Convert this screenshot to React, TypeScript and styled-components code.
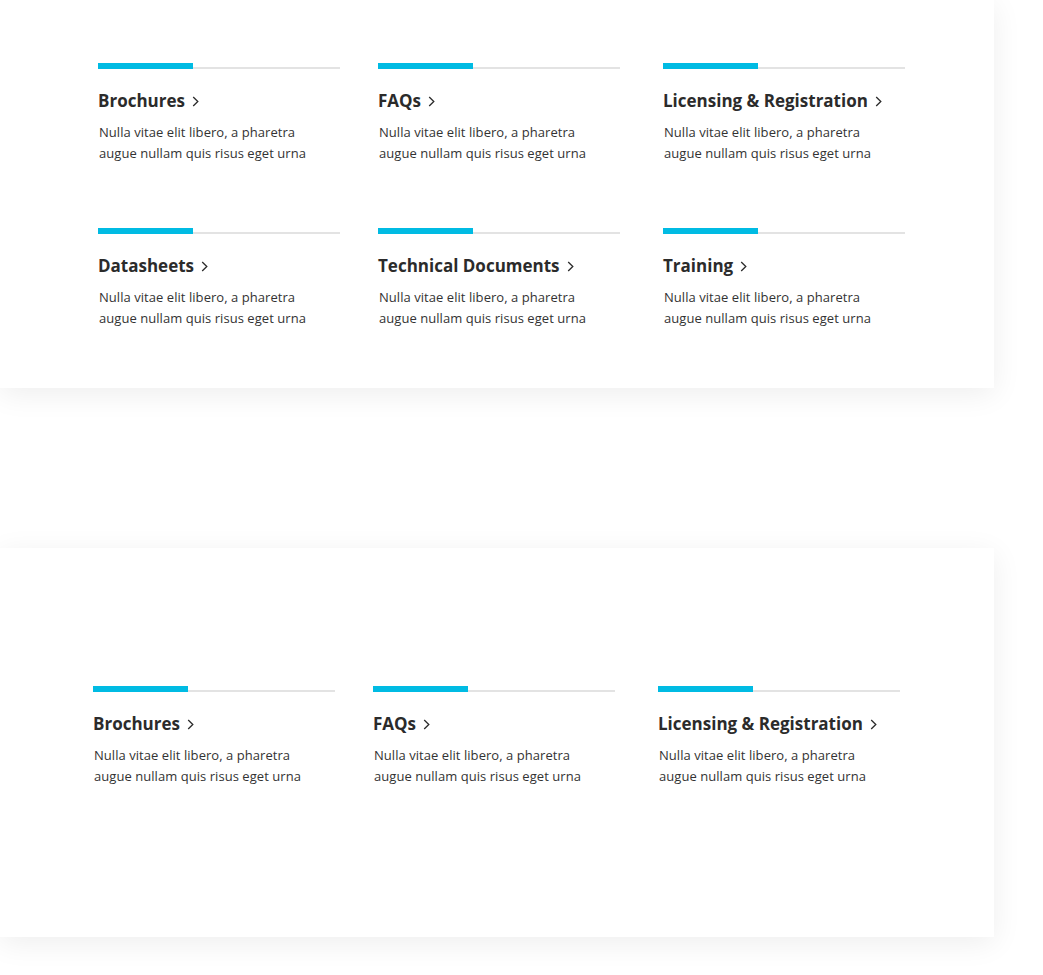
import styled, { createGlobalStyle } from 'styled-components';

const GlobalStyle = createGlobalStyle`
  html, body {
    margin: 0;
    padding: 0;
    background: #fff;
  }
  body {
    font-family: 'Open Sans', 'Noto Sans', sans-serif;
    color: #2b2b2b;
  }
`;

interface LinkItem {
  title: string;
}

const firstPanel: LinkItem[] = [
  { title: 'Brochures' },
  { title: 'FAQs' },
  { title: 'Licensing & Registration' },
  { title: 'Datasheets' },
  { title: 'Technical Documents' },
  { title: 'Training' },
];

const secondPanel: LinkItem[] = [
  { title: 'Brochures' },
  { title: 'FAQs' },
  { title: 'Licensing & Registration' },
];

const Chevron = () => (
  <svg width='7' height='11' viewBox='0 0 7 11' fill='none'>
    <polyline points='1.2,1 5.8,5.5 1.2,10' stroke='#2b2b2b' strokeWidth='1.3' />
  </svg>
);

const LinkCard = ({ item }: { item: LinkItem }) => (
  <Item>
    <Rule />
    <Title>
      {item.title}
      <Chevron />
    </Title>
    <Body>
      Nulla vitae elit libero, a pharetra
      <br />
      augue nullam quis risus eget urna
    </Body>
  </Item>
);

export default function App() {
  return (
    <>
      <GlobalStyle />
      <Page>
        <Panel $pad='63px 0 0 98px' $height={388}>
          <Grid>
            {firstPanel.map((item, i) => (
              <LinkCard key={item.title + i} item={item} />
            ))}
          </Grid>
        </Panel>
        <Panel $pad='138px 0 0 93px' $height={389}>
          <Grid>
            {secondPanel.map((item, i) => (
              <LinkCard key={item.title + i} item={item} />
            ))}
          </Grid>
        </Panel>
      </Page>
    </>
  );
}

const Page = styled.div`
  display: flex;
  flex-direction: column;
  gap: 160px;
  padding-bottom: 40px;
`;

const Panel = styled.section<{ $pad: string; $height: number }>`
  box-sizing: border-box;
  width: 994px;
  height: ${({ $height }) => $height}px;
  padding: ${({ $pad }) => $pad};
  background: #fff;
  box-shadow: 0 6px 28px rgba(0, 0, 0, 0.07);
`;

const Grid = styled.div`
  display: grid;
  grid-template-columns: 280px 285px 242px;
  grid-auto-rows: 165px;
`;

const Item = styled.div`
  width: 242px;
  display: flex;
  flex-direction: column;
`;

const Rule = styled.div`
  position: relative;
  height: 6px;
  &::before {
    content: '';
    position: absolute;
    left: 0;
    right: 0;
    bottom: 0;
    height: 2px;
    background: #e3e3e3;
  }
  &::after {
    content: '';
    position: absolute;
    left: 0;
    bottom: 0;
    width: 95px;
    height: 6px;
    background: #00bbe3;
  }
`;

const Title = styled.h3`
  display: flex;
  align-items: center;
  gap: 7px;
  margin: 20px 0 0;
  font-size: 17px;
  font-weight: 700;
  line-height: 24px;
  color: #2b2b2b;
  white-space: nowrap;
`;

const Body = styled.p`
  margin: 9px 0 0 1px;
  font-size: 13px;
  line-height: 21px;
  color: #333;
  letter-spacing: 0.05px;
  white-space: nowrap;
`;
